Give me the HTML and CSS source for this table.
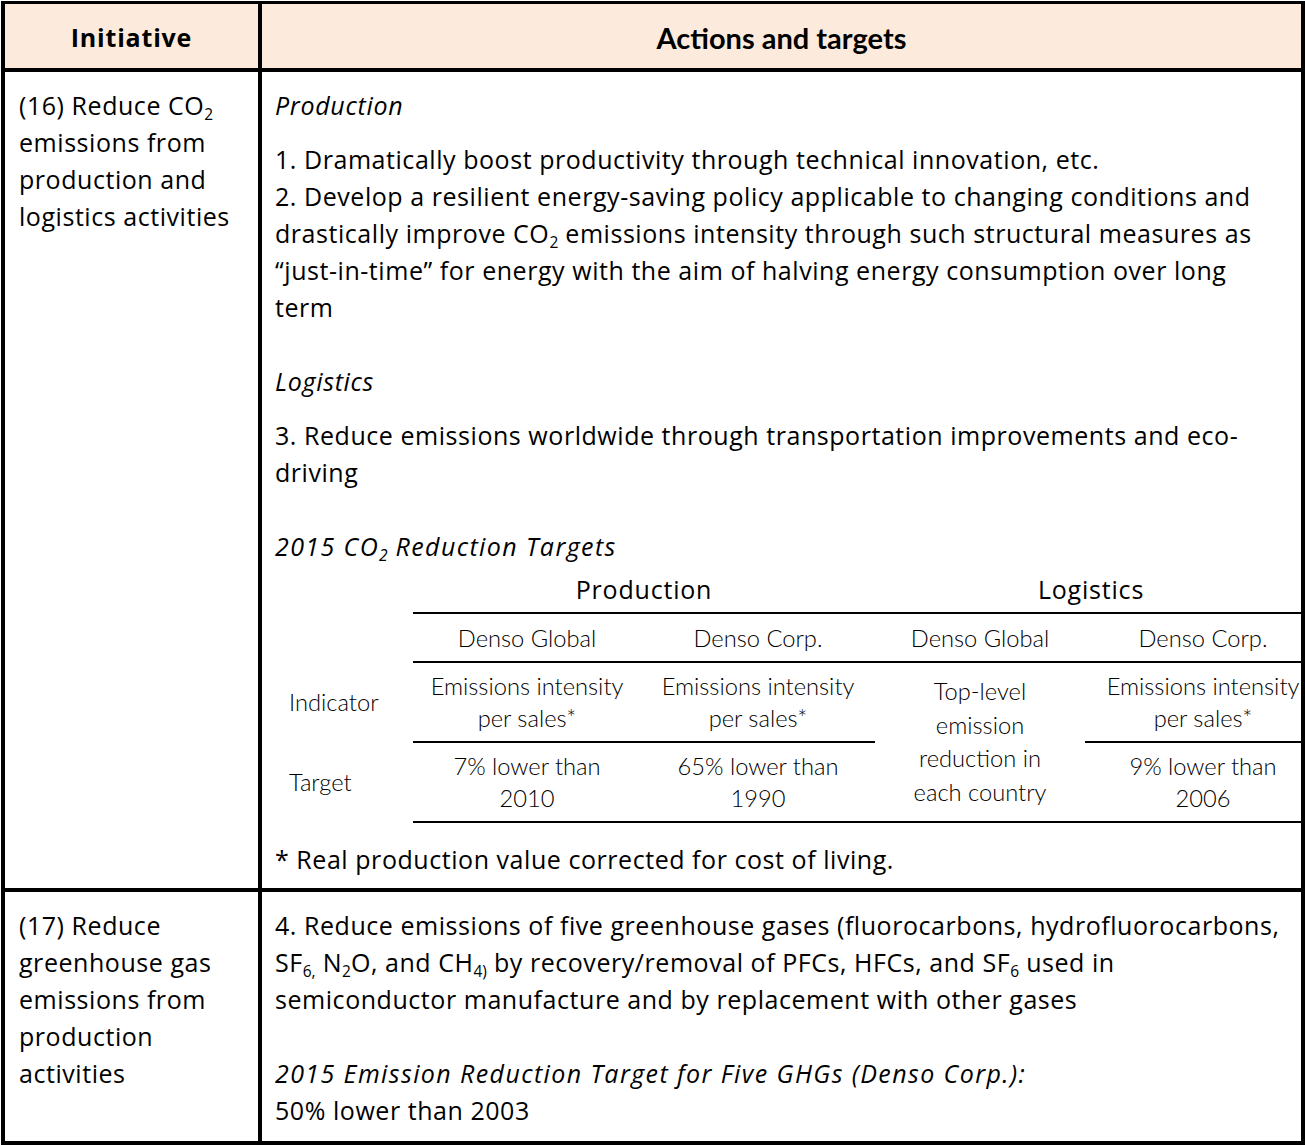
FILE: index.html
```html
<!DOCTYPE html>
<html lang="en">
<head>
<meta charset="utf-8">
<title>Initiatives and targets</title>
<link rel="stylesheet" href="styles.css">
</head>
<body>
<div class="sheet">
  <div class="cell head head-init">Initiative</div>
  <div class="cell head head-actions">Actions and targets</div>

  <div class="cell init">(16) Reduce CO<sub>2</sub><br>emissions from<br>production and<br>logistics activities</div>
  <div class="cell actions">
    <p class="sub-head">Production</p>
    <p class="item">1. Dramatically boost productivity through technical innovation, etc.<br>2. Develop a resilient energy-saving policy applicable to changing conditions and<br>drastically improve CO<sub>2</sub> emissions intensity through such structural measures as<br>“just-in-time” for energy with the aim of halving energy consumption over long<br>term</p>
    <p class="sub-head gap-lg">Logistics</p>
    <p class="item">3. Reduce emissions worldwide through transportation improvements and eco-<br>driving</p>
    <p class="sub-head sub-head-wide gap-lg">2015 CO<sub>2</sub> Reduction Targets</p>
    <div class="targets">
      <div class="t t-label"></div>
      <div class="t t-group t-span2">Production</div>
      <div class="t t-group t-span2 t-log">Logistics</div>

      <div class="t t-label"></div>
      <div class="t t-line">Denso Global</div>
      <div class="t t-line">Denso Corp.</div>
      <div class="t t-line">Denso Global</div>
      <div class="t t-line t-c4">Denso Corp.</div>

      <div class="t t-label">Indicator</div>
      <div class="t t-line t-two">Emissions intensity<br>per sales*</div>
      <div class="t t-line t-two">Emissions intensity<br>per sales*</div>
      <div class="t t-line t-merged">Top-level<br>emission<br>reduction in<br>each country</div>
      <div class="t t-line t-two t-c4">Emissions intensity<br>per sales*</div>

      <div class="t t-label">Target</div>
      <div class="t t-line t-two">7% lower than<br>2010</div>
      <div class="t t-line t-two">65% lower than<br>1990</div>
      <div class="t t-line t-two t-c4">9% lower than<br>2006</div>
    </div>
    <p class="note">* Real production value corrected for cost of living.</p>
  </div>

  <div class="cell init">(17) Reduce<br>greenhouse gas<br>emissions from<br>production<br>activities</div>
  <div class="cell actions actions-last">
    <p class="item">4. Reduce emissions of five greenhouse gases (fluorocarbons, hydrofluorocarbons,<br>SF<sub>6,</sub> N<sub>2</sub>O, and CH<sub>4)</sub> by recovery/removal of PFCs, HFCs, and SF<sub>6</sub> used in<br>semiconductor manufacture and by replacement with other gases</p>
    <p class="sub-head sub-head-wide gap-lg">2015 Emission Reduction Target for Five GHGs (Denso Corp.):</p>
    <p class="item plain">50% lower than 2003</p>
  </div>
</div>
</body>
</html>
```

FILE: styles.css
```css
* { box-sizing: border-box; }

html, body {
  margin: 0;
  padding: 0;
  background: #ffffff;
}

body {
  font-family: "Open Sans", "Lato", "Liberation Sans", sans-serif;
  font-size: 25px;
  line-height: 37px;
  letter-spacing: 0.55px;
  color: #000000;
}

.sheet {
  margin: 1px 0 0 1px;
  width: 1304px;
  display: grid;
  grid-template-columns: 253px 1fr;
  grid-template-rows: 64px auto auto;
  gap: 4px;
  padding: 3px 4px 4px 4px;
  background: #000000;
}

.cell {
  background: #ffffff;
  overflow: hidden;
}

.head {
  background: #fcebdc;
  display: flex;
  align-items: center;
  justify-content: center;
  font-weight: 700;
  padding-top: 3px;
}

.head-init {
  font-family: "Open Sans", "Lato", sans-serif;
  font-size: 25px;
  letter-spacing: 0.8px;
}

.head-actions {
  font-family: "Lato", "Open Sans", sans-serif;
  font-size: 29px;
  letter-spacing: 0;
}

.init {
  padding: 15px 10px 10px 14px;
  white-space: nowrap;
}

.actions {
  padding: 15px 0 10px 13px;
}

.actions-last {
  padding-bottom: 12px;
}

p {
  margin: 0;
  white-space: nowrap;
}

.sub-head {
  font-style: italic;
  letter-spacing: 0.7px;
}

.sub-head-wide {
  letter-spacing: 1.4px;
}

.item {
  margin-top: 17px;
}

.actions-last .item:first-child {
  margin-top: 0;
}

.gap-lg {
  margin-top: 37px;
}

.plain {
  margin-top: 0;
}

.note {
  margin-top: 18px;
}

sub {
  font-size: 0.62em;
  line-height: 0;
  letter-spacing: 0;
  vertical-align: -0.3em;
}

.targets {
  display: grid;
  grid-template-columns: 138px 228px 234px 210px 236px;
  grid-template-rows: 49px 49px 80px 80px;
  width: 1046px;
  font-style: normal;
}

.t {
  display: flex;
  align-items: center;
  justify-content: center;
  text-align: center;
  white-space: nowrap;
  font-family: "Lato", "Open Sans", sans-serif;
  font-weight: 300;
  font-size: 23.7px;
  line-height: 32px;
  letter-spacing: 0;
}

.t-label {
  justify-content: flex-start;
  text-align: left;
  padding-left: 14px;
  border-bottom: 2px solid transparent;
}

.t-group {
  font-family: "Open Sans", "Lato", sans-serif;
  font-weight: 400;
  font-size: 25px;
  letter-spacing: 0.8px;
  border-bottom: 2px solid #000000;
}

.t-span2 {
  grid-column: span 2;
}

.t-log {
  padding-right: 14px;
}

.t-line {
  border-bottom: 2px solid #000000;
}

.t-merged {
  grid-row: span 2;
  line-height: 33.5px;
}
```
